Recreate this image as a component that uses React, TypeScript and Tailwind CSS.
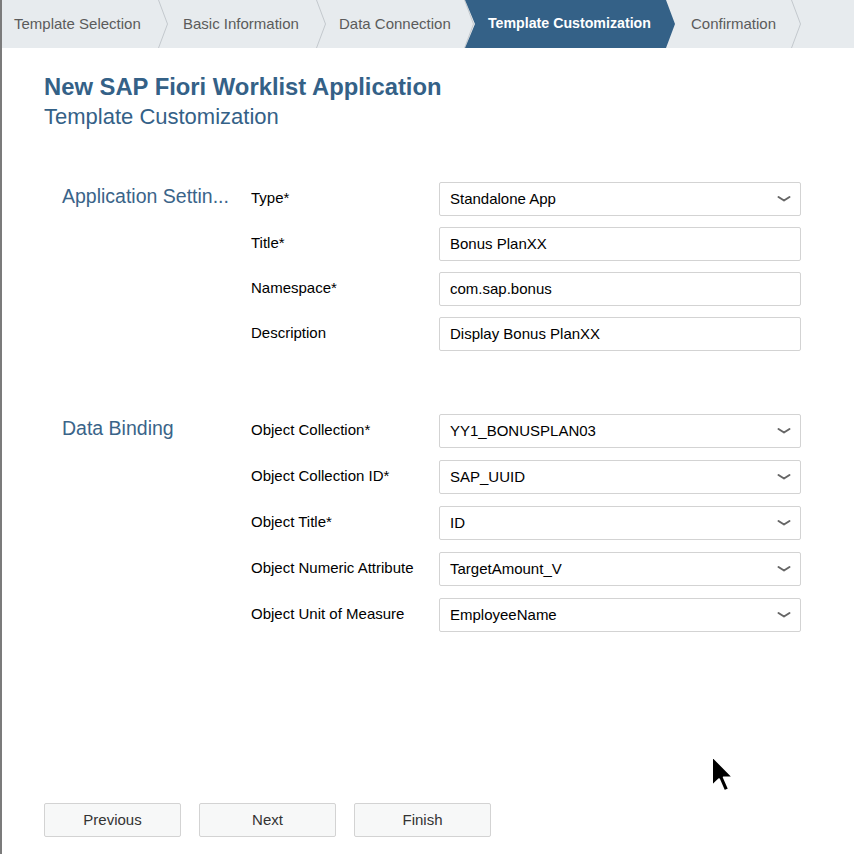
const font = { fontFamily: '"Liberation Sans", Arial, Helvetica, sans-serif' };

type Step = { label: string; width: string; pad: string; active?: boolean };

const steps: Step[] = [
  { label: "Template Selection", width: "w-[157px]", pad: "pl-[12px]" },
  { label: "Basic Information", width: "w-[158px]", pad: "pl-[24px]" },
  { label: "Data Connection", width: "w-[148px]", pad: "pl-[22px]" },
  { label: "Template Customization", width: "w-[201px]", pad: "pl-[25px]", active: true },
  { label: "Confirmation", width: "w-[126px]", pad: "pl-[25px]" },
];

function Chevron() {
  return (
    <svg className="absolute -right-[10px] top-0 z-10" width="11" height="48" viewBox="0 0 11 48">
      <path d="M0.5 0 L9.5 24 L0.5 48" fill="none" stroke="#c3c8cd" strokeWidth="1" />
    </svg>
  );
}

function StepBar() {
  return (
    <div className="flex h-[48px] bg-[#e7ebee]">
      {steps.map((step) =>
        step.active ? (
          <div key={step.label} className={`relative ${step.width} z-20 h-full shrink-0`}>
            <div className="absolute inset-y-0 -right-[9px] left-0 flex items-center bg-[#346187] pl-[23px] text-[14.2px] font-bold text-white [clip-path:polygon(0_0,calc(100%-9px)_0,100%_50%,calc(100%-9px)_100%,0_100%,10px_50%)]">
              {step.label}
            </div>
          </div>
        ) : (
          <div
            key={step.label}
            className={`relative ${step.width} ${step.pad} flex h-full shrink-0 items-center text-[15px] text-[#5b5b5b]`}
          >
            {step.label}
            <Chevron />
          </div>
        )
      )}
    </div>
  );
}

function SelectArrow() {
  return (
    <svg width="14" height="8" viewBox="0 0 14 8">
      <path d="M1.5 2 L7 5.5 L12.5 2" fill="none" stroke="#666" strokeWidth="2" strokeLinecap="round" strokeLinejoin="round" />
    </svg>
  );
}

function Field({ label, value, select }: { label: string; value: string; select?: boolean }) {
  return (
    <div className="flex items-start">
      <div className="w-[188px] pt-[7px] text-[15px] leading-[18px] text-black">{label}</div>
      <div className="flex h-[34px] w-[362px] items-center justify-between rounded-[2px] border border-[#d3d3d3] bg-white pl-[10px] pr-[9px] text-[15px] text-black">
        <span>{value}</span>
        {select && <SelectArrow />}
      </div>
    </div>
  );
}

function Section({
  title,
  gap,
  fields,
}: {
  title: string;
  gap: string;
  fields: { label: string; value: string; select?: boolean }[];
}) {
  return (
    <div className="flex pl-[60px]">
      <div className="w-[189px] pt-[2px] text-[19.5px] leading-[24px] whitespace-nowrap text-[#3a6489]">{title}</div>
      <div className={`flex flex-col ${gap}`}>
        {fields.map((f) => (
          <Field key={f.label} {...f} />
        ))}
      </div>
    </div>
  );
}

function Cursor() {
  return (
    <svg className="absolute left-[709px] top-[754px]" width="26" height="40" viewBox="0 0 13 20">
      <path
        d="M1.5 1 L1.5 16 L5 12.6 L7.6 18.6 L10 17.6 L7.4 11.7 L12 11.7 Z"
        fill="#000"
        stroke="#fff"
        strokeWidth="1"
        strokeLinejoin="round"
      />
    </svg>
  );
}

export default function App() {
  return (
    <div className="relative flex h-[854px] w-[854px] overflow-hidden bg-white" style={font}>
      <div className="w-[2px] shrink-0 bg-[#7b7b7b]" />
      <div className="flex min-w-0 flex-1 flex-col">
        <StepBar />
        <div className="pl-[42px] pt-[24px]">
          <div className="text-[23.8px] font-bold leading-[30px] text-[#346187]">New SAP Fiori Worklist Application</div>
          <div className="mt-[1px] text-[22px] leading-[28px] text-[#346187]">Template Customization</div>
        </div>
        <div className="mt-[51px] flex flex-col">
          <Section
            title="Application Settin..."
            gap="gap-[11px]"
            fields={[
              { label: "Type*", value: "Standalone App", select: true },
              { label: "Title*", value: "Bonus PlanXX" },
              { label: "Namespace*", value: "com.sap.bonus" },
              { label: "Description", value: "Display Bonus PlanXX" },
            ]}
          />
          <div className="h-[63px]" />
          <Section
            title="Data Binding"
            gap="gap-[12px]"
            fields={[
              { label: "Object Collection*", value: "YY1_BONUSPLAN03", select: true },
              { label: "Object Collection ID*", value: "SAP_UUID", select: true },
              { label: "Object Title*", value: "ID", select: true },
              { label: "Object Numeric Attribute", value: "TargetAmount_V", select: true },
              { label: "Object Unit of Measure", value: "EmployeeName", select: true },
            ]}
          />
        </div>
        <div className="mt-auto mb-[17px] flex gap-[18px] pl-[42px]">
          {["Previous", "Next", "Finish"].map((b) => (
            <button
              key={b}
              type="button"
              className="h-[34px] w-[137px] rounded-[2px] border border-[#d3d3d3] bg-[#f7f8f8] text-[15px] text-[#333]"
            >
              {b}
            </button>
          ))}
        </div>
      </div>
      <Cursor />
    </div>
  );
}
